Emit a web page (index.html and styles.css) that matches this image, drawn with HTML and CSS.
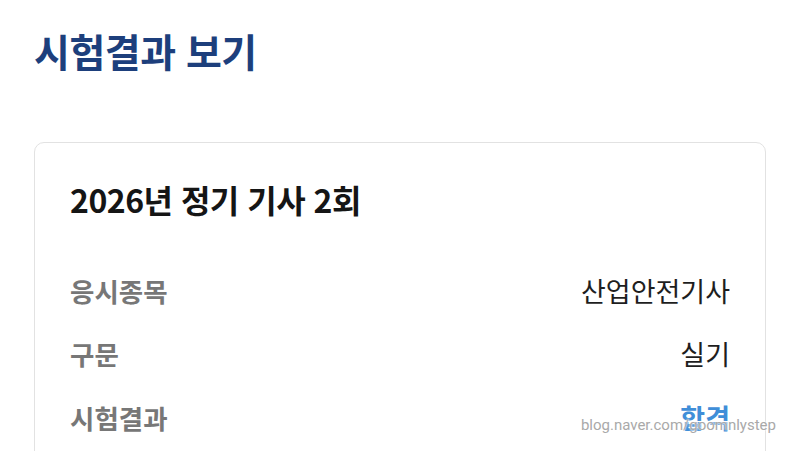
FILE: index.html
```html
<!DOCTYPE html>
<html lang="ko">
<head>
<meta charset="utf-8">
<link rel="stylesheet" href="styles.css">
</head>
<body>
<main class="page">
  <h1 class="page-title">시험결과 보기</h1>
  <section class="card">
    <h2 class="card-title">2026년 정기 기사 2회</h2>
    <dl class="rows">
      <div class="row"><dt class="label">응시종목</dt><dd class="value">산업안전기사</dd></div>
      <div class="row"><dt class="label">구문</dt><dd class="value">실기</dd></div>
      <div class="row"><dt class="label">시험결과</dt><dd class="value pass">합격</dd></div>
    </dl>
  </section>
</main>
<div class="watermark">blog.naver.com/goomnlystep</div>
</body>
</html>
```

FILE: styles.css
```css
html, body {
  margin: 0;
  padding: 0;
  background: #ffffff;
  overflow: hidden;
}
body {
  font-family: "Noto Sans CJK KR", "Noto Sans", sans-serif;
  width: 800px;
  height: 451px;
  position: relative;
}
.page {
  padding: 24px 34px 0 34px;
}
.page-title {
  margin: 0;
  font-size: 39px;
  line-height: 52px;
  font-weight: 700;
  color: #1d3f7c;
  letter-spacing: -0.5px;
}
.card {
  margin-top: 66px;
  border: 1.5px solid #e2e2e2;
  border-radius: 10px;
  padding: 33px 35px 0 35px;
  height: 400px;
}
.card-title {
  margin: 0;
  font-size: 32px;
  line-height: 46px;
  font-weight: 700;
  color: #151515;
  letter-spacing: -0.5px;
}
.rows {
  margin: 48px 0 0 0;
  display: flex;
  flex-direction: column;
  gap: 23.5px;
}
.row {
  display: flex;
  justify-content: space-between;
  align-items: center;
  height: 40px;
}
.label {
  margin: 0;
  font-size: 26.5px;
  font-weight: 700;
  color: #777777;
}
.value {
  margin: 0;
  font-size: 27px;
  font-weight: 400;
  color: #1e1e1e;
}
.value.pass {
  color: #3f8ed8;
  font-weight: 700;
}
.watermark {
  position: absolute;
  right: 24px;
  top: 416px;
  font-family: Roboto, "Liberation Sans", sans-serif;
  font-size: 15px;
  color: #a9a9a9;
  text-shadow: 0 0 2px #ffffff, 0 0 2px #ffffff;
}
```
